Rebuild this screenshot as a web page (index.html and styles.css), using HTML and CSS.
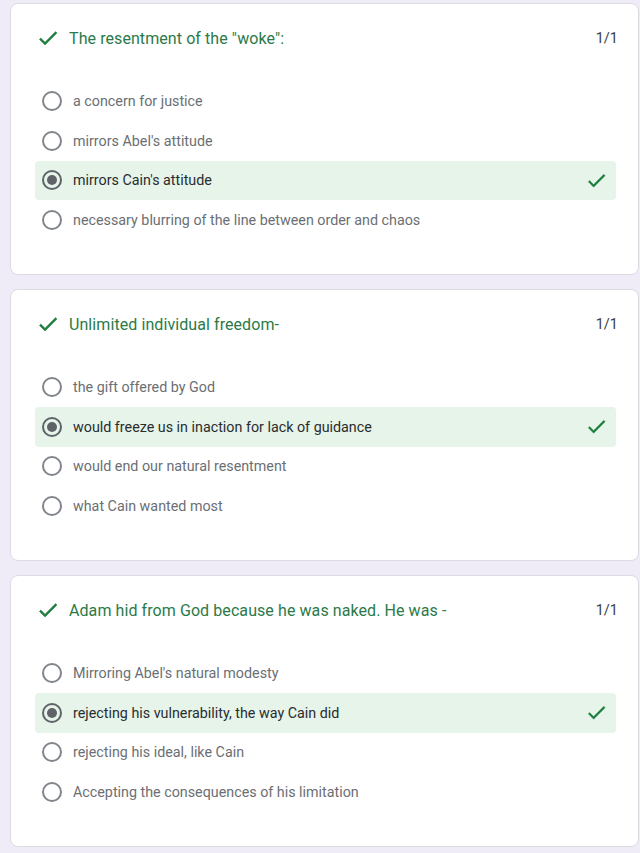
FILE: index.html
```html
<!DOCTYPE html>
<html>
<head>
<meta charset="utf-8">
<link rel="stylesheet" href="styles.css">
</head>
<body>
<div class="page">
  <div class="card">
    <div class="head">
      <svg class="hcheck" viewBox="0 0 24 24"><path d="M9 16.17L4.83 12l-1.42 1.41L9 19 21 7l-1.41-1.41z"/></svg>
      <div class="title">The resentment of the "woke":</div>
      <div class="score">1/1</div>
    </div>
    <div class="opts">
      <div class="opt"><span class="radio"></span><span class="label">a concern for justice</span></div>
      <div class="opt"><span class="radio"></span><span class="label">mirrors Abel's attitude</span></div>
      <div class="opt sel"><span class="radio on"></span><span class="label">mirrors Cain's attitude</span><svg class="ocheck" viewBox="0 0 24 24"><path d="M9 16.17L4.83 12l-1.42 1.41L9 19 21 7l-1.41-1.41z"/></svg></div>
      <div class="opt"><span class="radio"></span><span class="label">necessary blurring of the line between order and chaos</span></div>
    </div>
  </div>
  <div class="card">
    <div class="head">
      <svg class="hcheck" viewBox="0 0 24 24"><path d="M9 16.17L4.83 12l-1.42 1.41L9 19 21 7l-1.41-1.41z"/></svg>
      <div class="title">Unlimited individual freedom-</div>
      <div class="score">1/1</div>
    </div>
    <div class="opts">
      <div class="opt"><span class="radio"></span><span class="label">the gift offered by God</span></div>
      <div class="opt sel"><span class="radio on"></span><span class="label">would freeze us in inaction for lack of guidance</span><svg class="ocheck" viewBox="0 0 24 24"><path d="M9 16.17L4.83 12l-1.42 1.41L9 19 21 7l-1.41-1.41z"/></svg></div>
      <div class="opt"><span class="radio"></span><span class="label">would end our natural resentment</span></div>
      <div class="opt"><span class="radio"></span><span class="label">what Cain wanted most</span></div>
    </div>
  </div>
  <div class="card">
    <div class="head">
      <svg class="hcheck" viewBox="0 0 24 24"><path d="M9 16.17L4.83 12l-1.42 1.41L9 19 21 7l-1.41-1.41z"/></svg>
      <div class="title">Adam hid from God because he was naked. He was -</div>
      <div class="score">1/1</div>
    </div>
    <div class="opts">
      <div class="opt"><span class="radio"></span><span class="label">Mirroring Abel's natural modesty</span></div>
      <div class="opt sel"><span class="radio on"></span><span class="label">rejecting his vulnerability, the way Cain did</span><svg class="ocheck" viewBox="0 0 24 24"><path d="M9 16.17L4.83 12l-1.42 1.41L9 19 21 7l-1.41-1.41z"/></svg></div>
      <div class="opt"><span class="radio"></span><span class="label">rejecting his ideal, like Cain</span></div>
      <div class="opt"><span class="radio"></span><span class="label">Accepting the consequences of his limitation</span></div>
    </div>
  </div>
</div>
</body>
</html>
```
FILE: styles.css
```css
html, body {
  margin: 0;
  padding: 0;
  background: #f0ecf7;
  font-family: Roboto, "Noto Sans", Arial, sans-serif;
}
.page {
  padding: 3px 1px 0 10px;
  display: flex;
  flex-direction: column;
  gap: 14px;
}
.card {
  background: #fff;
  border: 1px solid #dcdbe2;
  border-radius: 8px;
  height: 272px;
  box-sizing: border-box;
  padding: 22px 22px 0 24px;
}
.head {
  display: flex;
  align-items: center;
  height: 24px;
  padding-left: 1px;
  margin-right: -2px;
}
.hcheck {
  width: 24px;
  height: 24px;
  fill: #1e7e3e;
  stroke: #1e7e3e;
  stroke-width: 0.5;
  margin-right: 9px;
}
.title {
  flex: 1;
  font-size: 16px;
  color: #2b7a48;
  letter-spacing: 0.08px;
}
.score {
  font-size: 14.5px;
  color: #3c4043;
}
.opts {
  margin-top: 31.5px;
  display: flex;
  flex-direction: column;
}
.opt {
  height: 39.5px;
  display: flex;
  align-items: center;
  padding-left: 7px;
  padding-right: 8px;
  border-radius: 4px;
}
.opt.sel {
  background: #e6f4ea;
}
.radio {
  width: 20px;
  height: 20px;
  box-sizing: border-box;
  border: 2px solid #80868b;
  border-radius: 50%;
  margin-right: 11px;
  display: flex;
  align-items: center;
  justify-content: center;
  flex: none;
}
.radio.on {
  border-color: #5f6368;
}
.radio.on::after {
  content: "";
  width: 10px;
  height: 10px;
  border-radius: 50%;
  background: #5f6368;
}
.label {
  flex: 1;
  font-size: 14.3px;
  color: #6b6f73;
}
.sel .label {
  color: #2a2c2e;
}
.ocheck {
  width: 23px;
  height: 23px;
  fill: #1e7e3e;
  stroke: #1e7e3e;
  stroke-width: 0.4;
}
```
